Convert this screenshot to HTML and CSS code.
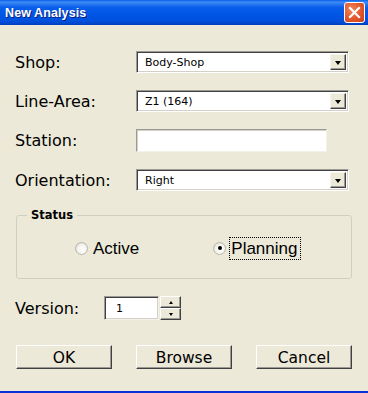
FILE: index.html
```html
<!DOCTYPE html>
<html>
<head>
<meta charset="utf-8">
<link rel="stylesheet" href="styles.css">
</head>
<body>
<div class="window">
  <div class="titlebar">
    <span class="title">New Analysis</span>
    <span class="close"><svg width="13" height="13" viewBox="0 0 13 13"><path d="M2 2 L11 11 M11 2 L2 11" stroke="#fff" stroke-width="2.2" stroke-linecap="square"/></svg></span>
  </div>
  <div class="content">
    <div class="form">
      <label class="lbl">Shop:</label>
      <div class="combo"><span class="val">Body-Shop</span><span class="drop"><i class="tri"></i></span></div>
      <label class="lbl">Line-Area:</label>
      <div class="combo"><span class="val">Z1 (164)</span><span class="drop"><i class="tri"></i></span></div>
      <label class="lbl">Station:</label>
      <div class="textbox"></div>
      <label class="lbl">Orientation:</label>
      <div class="combo"><span class="val">Right</span><span class="drop"><i class="tri"></i></span></div>
    </div>
    <div class="group">
      <span class="legend">Status</span>
      <div class="radios">
        <div class="radio"><span class="circle"></span><span class="rtext">Active</span></div>
        <div class="radio"><span class="circle checked"></span><span class="rtext focus">Planning</span></div>
      </div>
    </div>
    <div class="version">
      <label class="lbl">Version:</label>
      <div class="spinbox"><span class="val">1</span></div>
      <div class="spin"><span class="sbtn"><i class="up"></i></span><span class="sbtn"><i class="down"></i></span></div>
    </div>
    <div class="buttons">
      <button class="btn">OK</button>
      <button class="btn">Browse</button>
      <button class="btn">Cancel</button>
    </div>
  </div>
</div>
</body>
</html>
```
FILE: styles.css
```css
* { box-sizing: border-box; }
html, body { margin: 0; padding: 0; }
body { width: 368px; height: 393px; overflow: hidden; font-family: "DejaVu Sans", sans-serif; }
.window {
  width: 368px; height: 393px; background: #ECE9D8;
  border-bottom: 2px solid #0831D9;
  display: flex; flex-direction: column;
}
.titlebar {
  height: 25px; flex: none;
  background: linear-gradient(to bottom, #0A5EE8 0%, #3D8CF6 8%, #2B7AF2 16%, #0A5EEB 30%, #0055E5 60%, #0050DD 84%, #003FC0 100%);
  display: flex; align-items: center; justify-content: space-between;
  padding: 0 3px 0 5px;
}
.title {
  color: #fff; font-family: "Liberation Sans", sans-serif; font-weight: bold; font-size: 12.5px;
  text-shadow: 1px 1px 0 #0A1E80; letter-spacing: 0.1px;
}
.close {
  width: 21px; height: 21px; border: 1px solid #fff; border-radius: 3px;
  background: radial-gradient(circle at 35% 35%, #F0865C 0%, #E2562A 55%, #C8401A 100%);
  display: flex; align-items: center; justify-content: center; margin-top: -1px;
}
.content { padding: 26px 0 0 15px; display: flex; flex-direction: column; }
.form {
  display: grid; grid-template-columns: 121px auto; row-gap: 17px; align-items: center;
  justify-items: start;
}
.lbl { font-size: 16px; color: #000; }
.combo {
  width: 213px; height: 22px; background: #fff;
  border-top: 1px solid #9C9A94; border-left: 1px solid #9C9A94;
  border-right: 1px solid #fff; border-bottom: 1px solid #fff;
  box-shadow: inset 1px 1px 0 #404040, inset -1px -1px 0 #D4D0C8;
  display: flex; align-items: center; justify-content: space-between;
  padding: 0 2px 0 8px;
}
.val { font-size: 11px; color: #000; }
.drop {
  width: 16px; height: 16px; background: #ECE9D8;
  border-top: 1px solid #F5F4EE; border-left: 1px solid #F5F4EE;
  border-right: 1px solid #404040; border-bottom: 1px solid #404040;
  box-shadow: inset -1px -1px 0 #9C9A94;
  display: flex; align-items: center; justify-content: center;
}
.tri {
  width: 0; height: 0; border-left: 3.5px solid transparent; border-right: 3.5px solid transparent;
  border-top: 4px solid #000; margin-top: 1px;
}
.textbox {
  width: 191px; height: 23px; background: #fff;
  border-top: 1px solid #9C9A94; border-left: 1px solid #9C9A94;
  border-right: 1px solid #F2F1EA; border-bottom: 1px solid #F2F1EA;
  box-shadow: inset 1px 1px 0 #D4D0C8;
}
.group {
  position: relative; margin-top: 24px; width: 336px; height: 64px; margin-left: 1px;
  border: 1px solid #D0D0BF; border-radius: 3px;
  display: flex; align-items: center;
}
.legend {
  position: absolute; left: 10px; top: -8px; padding: 0 4px; background: #ECE9D8;
  font-size: 11.5px; font-weight: bold; line-height: 14px;
}
.radios { display: flex; gap: 70px; margin-left: 58px; margin-top: 2px; }
.radio { display: flex; align-items: center; gap: 3px; }
.circle {
  width: 13px; height: 13px; border-radius: 50%;
  background: radial-gradient(circle at 60% 60%, #ffffff 0%, #F4F3EE 50%, #CFCDC2 100%);
  border: 1px solid #B8B6AA; position: relative;
}
.circle.checked::after {
  content: ""; position: absolute; left: 3.5px; top: 3.5px; width: 4px; height: 4px;
  border-radius: 50%; background: #000;
}
.rtext { font-family: "Liberation Sans", sans-serif; font-size: 17px; line-height: 21px; padding: 0 3px 0 1px; border: 1px solid transparent; }
.rtext.focus { border: 1px dotted #000; }
.version { display: flex; align-items: center; margin-top: 17px; }
.version .lbl { width: 89px; }
.spinbox {
  width: 55px; height: 24px; background: #fff;
  border-top: 1px solid #9C9A94; border-left: 1px solid #9C9A94;
  border-right: 1px solid #F2F1EA; border-bottom: 1px solid #F2F1EA;
  box-shadow: inset 1px 1px 0 #404040, inset -1px -1px 0 #D4D0C8;
  display: flex; align-items: center; padding-left: 11px;
}
.spin { display: flex; flex-direction: column; margin-left: 1px; }
.sbtn {
  width: 21px; height: 12px; background: #ECE9D8;
  border-top: 1px solid #fff; border-left: 1px solid #fff;
  border-right: 1px solid #404040; border-bottom: 1px solid #404040;
  box-shadow: inset -1px -1px 0 #9C9A94;
  display: flex; align-items: center; justify-content: center;
}
.up { width: 0; height: 0; border-left: 2.5px solid transparent; border-right: 2.5px solid transparent; border-bottom: 3px solid #000; }
.down { width: 0; height: 0; border-left: 2.5px solid transparent; border-right: 2.5px solid transparent; border-top: 3px solid #000; }
.buttons { display: flex; gap: 24px; margin-top: 25px; margin-left: 1px; }
.btn {
  width: 96px; height: 24px; margin: 0; padding: 2px 0 0 0;
  background: #ECE9D8; font-family: "DejaVu Sans", sans-serif; font-size: 15.5px; color: #000;
  border-top: 1px solid #fff; border-left: 1px solid #fff;
  border-right: 1px solid #404040; border-bottom: 1px solid #404040;
  box-shadow: inset -1px -1px 0 #9C9A94;
}
```
